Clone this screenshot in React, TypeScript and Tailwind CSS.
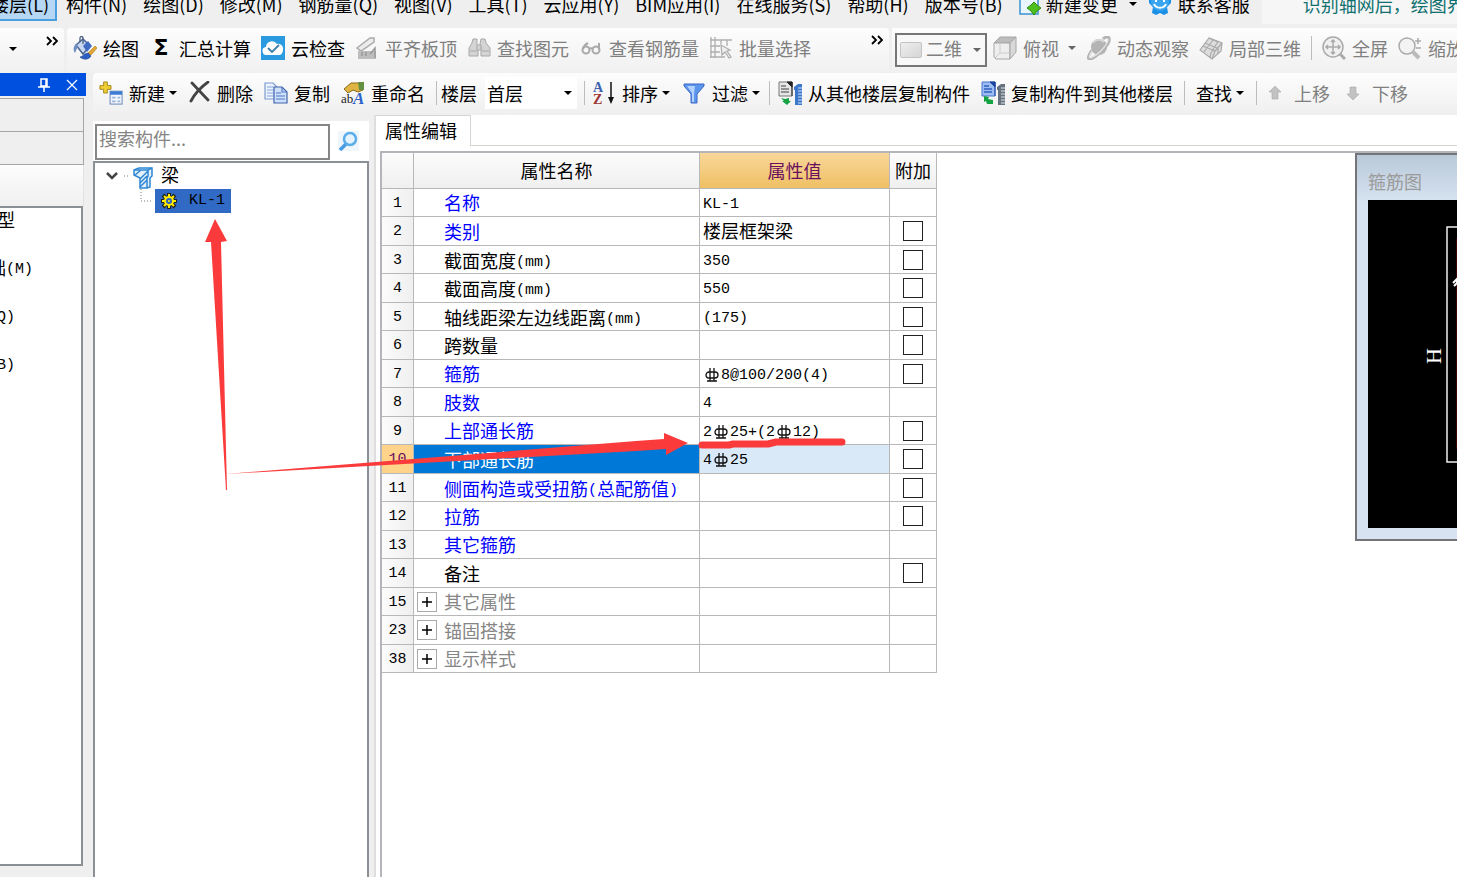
import React from 'react';

interface IconProps {
  className?: string;
}

const PaintIcon: React.FC<IconProps> = () => (
  <svg width="24" height="24" viewBox="0 0 24 24" className="shrink-0" aria-hidden="true">
    <path d="M3 9l7-6 7 7-7 8z" fill="#c9d8f0" stroke="#4a6694" strokeWidth="1.5" />
    <path d="M7 6V2c0-2 3-2 3 0v6" fill="none" stroke="#4a5f80" strokeWidth="1.3" />
    <path d="M3 8c-3 2-3 7-1 9l3-7z" fill="#6f8fc4" />
    <path d="M10 10l5-5 4 5-5 6z" fill="#3f6cc0" />
    <path d="M15 17l7-7 2 2-6 7z" fill="#e3a733" stroke="#a8741c" strokeWidth=".6" />
    <path d="M7 21c3 0 4-4 8-4l3 3c-2 4-8 4-11 1z" fill="#2c5fc6" stroke="#1d4288" strokeWidth=".6" />
  </svg>
);

const CloudCheckIcon: React.FC<IconProps> = () => (
  <svg width="24" height="24" viewBox="0 0 24 24" className="shrink-0" aria-hidden="true">
    <rect width="24" height="24" fill="#2a9be0" />
    <path d="M6 19a4 4 0 0 1-1-8 6 6 0 0 1 11-3 5 5 0 0 1 6 6c0 3-2 5-4 5z" fill="#fff" />
    <path d="M7 12l4 4 7-7" fill="none" stroke="#3d7da8" strokeWidth="1.8" />
  </svg>
);

const SlabIcon: React.FC<IconProps> = () => (
  <svg width="24" height="24" viewBox="0 0 24 24" className="shrink-0" aria-hidden="true">
    <path d="M2 12L15 2l4 0v4L6 15z" fill="#ececec" stroke="#aaa" strokeWidth="1.5" />
    <path d="M3 15h18v8H3z" fill="#bdbdbd" />
    <path d="M7 16v4M11 16v4M15 18l5-6v10" stroke="#999" strokeWidth="1.5" fill="none" />
  </svg>
);

const BinocularsIcon: React.FC<IconProps> = () => (
  <svg width="24" height="24" viewBox="0 0 24 24" className="shrink-0" fill="#d4d4d4" stroke="#a8a8a8" aria-hidden="true">
    <path d="M6 3h4v5l1 3v9H2v-8l3-5z" />
    <path d="M14 3h4l1 4 4 5v8h-9v-9l-1-3z" />
    <path d="M10 9h4v5h-4zM3 15h7M15 15h7" />
  </svg>
);

const GlassesIcon: React.FC<IconProps> = () => (
  <svg width="24" height="24" viewBox="0 0 24 24" className="shrink-0" fill="none" stroke="#aaa" strokeWidth="2" aria-hidden="true">
    <circle cx="7" cy="14" r="3.5" />
    <circle cx="17" cy="14" r="3.5" />
    <path d="M4 13c1-4 3-5 5-6M20 14V7M10 13c1-1 3-1 4 0" />
  </svg>
);

const BatchIcon: React.FC<IconProps> = () => (
  <svg width="24" height="24" viewBox="0 0 24 24" className="shrink-0" fill="none" stroke="#aeaeae" strokeWidth="1.3" aria-hidden="true">
    <path d="M2 1v21M6 1v21M1 4h22M1 10h10M1 16h10M1 21h15M12 4v4M18 4v6" />
    <path d="M12 9l9 5-3 1 4 6-2 1-4-6-3 3z" fill="#eee" />
  </svg>
);

const CubeIcon: React.FC<IconProps> = () => (
  <svg width="24" height="24" viewBox="0 0 24 24" className="shrink-0" stroke="#a6a6a6" aria-hidden="true">
    <path d="M1 7l6-6h16l-6 6z" fill="#bcbcbc" />
    <path d="M1 7h16v16H3l-2-2z" fill="#eee" />
    <path d="M17 7l6-6v15l-6 7z" fill="#d8d8d8" />
    <path d="M7 8v9h9M7 17l-5 5" fill="none" stroke="#ccc" />
  </svg>
);

const OrbitIcon: React.FC<IconProps> = () => (
  <svg width="24" height="24" viewBox="0 0 24 24" className="shrink-0" aria-hidden="true">
    <circle cx="12" cy="11" r="8" fill="#b4b4b4" />
    <path d="M6 7c3-4 8-4 11-1" fill="none" stroke="#d6d6d6" strokeWidth="2" />
    <path d="M5 14C-2 24 2 25 9 20S24 6 22 2c-1-2-4-1-6 1" fill="none" stroke="#b5b5b5" strokeWidth="3" />
    <path d="M5 15C0 23 3 23 9 19S22 6 21 3" fill="none" stroke="#e6e6e6" strokeWidth="1.2" />
  </svg>
);

const LocalCubeIcon: React.FC<IconProps> = () => (
  <svg width="24" height="24" viewBox="0 0 24 24" className="shrink-0" fill="#ddd" stroke="#aaa" strokeWidth="1.2" aria-hidden="true">
    <path d="M1 14l9-12 13 5-1 8-9 8z" />
    <path d="M10 2l9 4-1 1-6 10M4 10l12 5 7-8M6 7l12 5M14 4L5 16M16 15l-3 8M19 11v7M12 17l-1 5" fill="none" />
  </svg>
);

const FullScreenIcon: React.FC<IconProps> = () => (
  <svg width="24" height="24" viewBox="0 0 24 24" className="shrink-0" fill="none" stroke="#aaa" aria-hidden="true">
    <circle cx="11" cy="11" r="10" fill="#f0f0f0" strokeWidth="1.5" />
    <path d="M11 4v14M4 11h14M9 6l2-2 2 2M9 16l2 2 2-2M6 9l-2 2 2 2M16 9l2 2-2 2" strokeWidth="1.5" />
    <path d="M18 18l5 5" strokeWidth="3" />
  </svg>
);

const ZoomIcon: React.FC<IconProps> = () => (
  <svg width="24" height="24" viewBox="0 0 24 24" className="shrink-0" fill="none" stroke="#aaa" aria-hidden="true">
    <circle cx="9" cy="10" r="8" fill="#f3f3f3" strokeWidth="1.5" />
    <path d="M15 16l6 6" stroke="#bbb" strokeWidth="4" />
    <path d="M17 5h6M20 2v6M18 12h5" strokeWidth="1.5" />
  </svg>
);

const NewIcon: React.FC<IconProps> = () => (
  <svg width="24" height="24" viewBox="0 0 26 26" className="shrink-0" aria-hidden="true">
    <path d="M5 1h4v4h4v4H9v4H5V9H1V5h4z" fill="#f0cf35" stroke="#a48414" />
    <rect x="12" y="11" width="13" height="14" fill="#f2f6fc" stroke="#6080ae" />
    <path d="M12 11h13v4H12z" fill="#3e7bd4" />
    <path d="M14 18h4M20 18h3M14 22h4M20 22h3" stroke="#9db6dc" strokeWidth="2" />
  </svg>
);

const DeleteIcon: React.FC<IconProps> = () => (
  <svg width="22" height="24" viewBox="0 0 22 24" className="shrink-0" aria-hidden="true">
    <path d="M3 2l16 17M19 1C12 6 6 12 2 20" fill="none" stroke="#444" strokeWidth="2.8" strokeLinecap="round" />
  </svg>
);

const CopyIcon: React.FC<IconProps> = () => (
  <svg width="24" height="24" viewBox="0 0 24 24" className="shrink-0" strokeWidth="1.2" aria-hidden="true">
    <path d="M1 2h8l4 4v12H1z" fill="#edf3fc" stroke="#7d9bd0" />
    <path d="M3 6h6M3 9h7M3 12h7M3 15h7" stroke="#85a5dc" />
    <path d="M10 6h8l5 5v11H10z" fill="#cfe0fa" stroke="#3f62aa" />
    <path d="M18 6v5h5M12 12h5M12 15h9M12 18h9" fill="none" stroke="#4a76c8" />
  </svg>
);

const RenameIcon: React.FC<IconProps> = () => (
  <svg width="24" height="24" viewBox="0 0 24 24" className="shrink-0" aria-hidden="true">
    <path d="M3 8l7-6h7l5 3v4l-5 2-5-2-5 3z" fill="#e0b443" stroke="#8a6a1c" />
    <path d="M17 1h6v8h-5z" fill="#64913f" />
    <text x="0" y="22" fontSize="13" fontFamily="Liberation Serif, serif" fill="#222">ab</text>
    <text x="12" y="23" fontSize="17" fontWeight="bold" fontStyle="italic" fontFamily="Liberation Serif, serif" fill="#2c62c8">A</text>
  </svg>
);

const SortIcon: React.FC<IconProps> = () => (
  <svg width="24" height="24" viewBox="0 0 24 24" className="shrink-0" aria-hidden="true">
    <text x="1" y="11" fontSize="14" fontWeight="bold" fontFamily="Liberation Serif, serif" fill="#3e61ad">A</text>
    <text x="1" y="23" fontSize="14" fontWeight="bold" fontFamily="Liberation Serif, serif" fill="#9c3434">Z</text>
    <path d="M19 1v18" stroke="#111" strokeWidth="1.5" />
    <path d="M16 16h6l-3 7z" fill="#111" />
  </svg>
);

const FilterIcon: React.FC<IconProps> = () => (
  <svg width="24" height="24" viewBox="0 0 24 24" className="shrink-0" aria-hidden="true">
    <path d="M2 3h20v2l-7 8v9H9v-9L2 5z" fill="#5c95ed" stroke="#3a68c4" />
    <path d="M5 5h8l-1 8v8h-2v-9z" fill="#b4d2fb" />
  </svg>
);

const CopyFromIcon: React.FC<IconProps> = () => (
  <svg width="24" height="24" viewBox="0 0 24 24" className="shrink-0" aria-hidden="true">
    <path d="M1 1h13v14H1z" fill="#e5e5e5" stroke="#777" />
    <path d="M9 1h5v5zM14 1v14" fill="#222" stroke="#222" />
    <path d="M3 5h5M3 8h8M3 11h8" stroke="#777" strokeWidth="1.3" />
    <path d="M3 17l4 1 4-1v3h2l-4 4-5-4h2z" fill="#13a342" />
    <path d="M16 6l4-3h4v21h-7V9h-1z" fill="#3b78cb" />
    <path d="M20 7h4M20 10h4M20 13h4M20 16h4M20 19h4M20 22h4" stroke="#cfe0f8" />
  </svg>
);

const CopyToIcon: React.FC<IconProps> = () => (
  <svg width="24" height="24" viewBox="0 0 24 24" className="shrink-0" aria-hidden="true">
    <path d="M1 1h13v14H1z" fill="#9dbdf2" stroke="#4474cd" />
    <path d="M9 1h5v5zM14 1v14" fill="#1f46a0" stroke="#1f46a0" />
    <path d="M3 5h5M3 8h8M3 11h8" stroke="#2f5fc0" strokeWidth="1.3" />
    <path d="M3 15l5 1-1 2 5 1v4H6l-1-3-2 1z" fill="#13a342" />
    <path d="M16 6l4-3h4v21h-7V9h-1z" fill="#66727f" />
    <path d="M20 7h4M20 10h4M20 13h4M20 16h4M20 19h4M20 22h4" stroke="#dde2e8" />
  </svg>
);

const MoveIcon: React.FC<IconProps> = ({ className }) => (
  <svg width="14" height="14" viewBox="0 0 14 14" className={`shrink-0 ${className ?? ''}`} aria-hidden="true">
    <path d="M7 0l6 6h-3v7H4V6H1z" fill="#c2c2c2" stroke="#aaa" strokeWidth=".6" />
  </svg>
);

const ChangeIcon: React.FC<IconProps> = () => (
  <svg width="24" height="24" viewBox="0 0 24 24" className="shrink-0" aria-hidden="true">
    <path d="M2 0h18v22H2z" fill="#eaf6fd" stroke="#3d92cf" strokeWidth="1.5" />
    <path d="M16 10l3 3 4 3-4 3-3 4-3-4-4-3 4-3z" fill="#4fc01b" stroke="#2e8a10" />
  </svg>
);

const ServiceIcon: React.FC<IconProps> = () => (
  <svg width="24" height="24" viewBox="0 0 24 24" className="shrink-0" aria-hidden="true">
    <path d="M1 6h22v5l-4 4 1 6-4 2-4-2-4 2-4-2 1-6-4-4z" fill="#1c8fe6" />
    <circle cx="12" cy="10" r="9" fill="#3aa6f2" />
    <path d="M6 12c2 5 10 5 12 0M8 7v3M16 7v3" fill="none" stroke="#fff" strokeWidth="2" />
  </svg>
);

const SearchIcon: React.FC<IconProps> = () => (
  <svg width="22" height="22" viewBox="0 0 22 22" aria-hidden="true">
    <rect width="21" height="20" fill="#eef6fc" />
    <path d="M2 19l7-7" stroke="#4a9be0" strokeWidth="3.5" />
    <circle cx="12" cy="8" r="6" fill="#e4f3fd" stroke="#5badea" strokeWidth="2.5" />
  </svg>
);

const BeamIcon: React.FC<IconProps> = () => (
  <svg width="20" height="22" viewBox="0 0 20 22" fill="none" stroke="#2f86d2" strokeWidth="1.5" aria-hidden="true">
    <path d="M1 3l5-2h13v8l-2 2v9l-3 1H7V11L1 8z" fill="#e3f1fc" />
    <path d="M1 3h14l4-2M15 3v6l-1 2v10M2 8l6-5M7 12l8-8M7 16l7-7M7 20l7-7" />
  </svg>
);

const GearIcon: React.FC<IconProps> = () => (
  <svg width="16" height="16" viewBox="0 0 16 16" aria-hidden="true">
    <path d="M8 0v16M0 8h16M2 2l12 12M14 2L2 14" stroke="#222" strokeWidth="4" />
    <path d="M8 1v14M1 8h14M3 3l10 10M13 3L3 13" stroke="#ffee00" strokeWidth="2" />
    <circle cx="8" cy="8" r="4" fill="#2e63b8" stroke="#ffee00" strokeWidth="2" />
    <circle cx="8" cy="8" r="1" fill="#ffee00" />
  </svg>
);

// Grade symbol of the steel bar, as wide as one Chinese character
const Rebar: React.FC = () => (
  <svg width="18" height="14" viewBox="0 0 18 14" role="img" aria-label="HRB400" className="inline-block align-[-3px]" fill="none" stroke="#111" strokeWidth="1.3">
    <rect x="3" y="4" width="12" height="6" rx="3" />
    <path d="M7 0v13M11 0v13M4 13h10" />
  </svg>
);

const Caret: React.FC<{ muted?: boolean }> = ({ muted }) => (
  <svg width="10" height="6" viewBox="0 0 10 6" className="pointer-events-none shrink-0" aria-hidden="true">
    <path d="M1 1h8L5 5z" fill={muted ? '#666' : '#000'} />
  </svg>
);

const Chevrons: React.FC = () => (
  <svg width="14" height="10" viewBox="0 0 14 10" fill="none" stroke="#000" strokeWidth="1.8" aria-hidden="true">
    <path d="M1 1l4 4-4 4M7 1l4 4-4 4" />
  </svg>
);

const Separator: React.FC = () => <div className="h-6 w-px shrink-0 bg-[#bdbdbd]" />;

interface ToolButtonProps {
  icon?: React.ReactNode;
  label: string;
  caret?: boolean;
  disabled?: boolean;
}

const ToolButton: React.FC<ToolButtonProps> = ({ icon, label, caret = false, disabled = false }) => (
  <button
    type="button"
    disabled={disabled}
    className={`flex shrink-0 items-center gap-[6px] leading-6 ${disabled ? 'text-[#808080]' : 'text-black'}`}
  >
    {icon}
    <span className={`flex items-center ${disabled ? 'gap-2' : 'gap-[3px]'}`}>
      {label}
      {caret && <Caret muted={disabled} />}
    </span>
  </button>
);

const menus = [
  '构件(N)', '绘图(D)', '修改(M)', '钢筋量(Q)', '视图(V)', '工具(T)',
  '云应用(Y)', 'BIM应用(I)', '在线服务(S)', '帮助(H)', '版本号(B)',
];

const MenuBar: React.FC = () => (
  <header className="flex h-7 shrink-0 items-end overflow-hidden">
    <nav className="flex h-10 flex-1 items-start whitespace-nowrap leading-8">
      <button type="button" className="flex h-[33px] w-[57px] shrink-0 justify-end overflow-hidden border-r-2 border-b-2 border-[#4a9fdf] bg-[#b5d7f3] pr-[6px]">
        <span>楼层(L)</span>
      </button>
      <div className="ml-[9px] flex gap-4">
        {menus.map((menu) => (
          <button key={menu} type="button">{menu}</button>
        ))}
      </div>
      <div className="ml-[15px] flex h-8 items-center gap-[10px]">
        <button type="button" className="flex items-center gap-1">
          <ChangeIcon />
          <span>新建变更</span>
          <span className="ml-[6px]"><Caret /></span>
        </button>
        <button type="button" className="flex items-center gap-[6px]">
          <ServiceIcon />
          <span>联系客服</span>
        </button>
      </div>
      <div className="ml-3 h-9 flex-1 overflow-hidden bg-[#f6f6f6] pl-[41px] text-[#107070]">识别轴网后，绘图界面</div>
    </nav>
  </header>
);

const ViewToolbar: React.FC = () => (
  <div className="flex h-[45px] shrink-0 gap-[3px] overflow-hidden whitespace-nowrap">
    <div className="flex w-16 shrink-0 items-center justify-between rounded-r bg-linear-to-b from-[#fdfdfd] to-[#f0f0f0] pr-1 pb-1 pl-2">
      <Caret />
      <button type="button" aria-label="更多" className="mb-4"><Chevrons /></button>
    </div>
    <div className="flex w-[822px] shrink-0 items-center gap-[10px] rounded bg-linear-to-b from-[#fdfdfd] to-[#f0f0f0] pr-1 pb-[6px] pl-[6px]">
      <ToolButton icon={<PaintIcon />} label="绘图" />
      <ToolButton icon={<span className="w-6 text-center font-['DejaVu_Sans',sans-serif] text-[22px] font-bold">Σ</span>} label="汇总计算" />
      <ToolButton icon={<CloudCheckIcon />} label="云检查" />
      <ToolButton icon={<SlabIcon />} label="平齐板顶" disabled />
      <ToolButton icon={<BinocularsIcon />} label="查找图元" disabled />
      <ToolButton icon={<GlassesIcon />} label="查看钢筋量" disabled />
      <ToolButton icon={<BatchIcon />} label="批量选择" disabled />
      <button type="button" aria-label="更多" className="mb-4 ml-auto"><Chevrons /></button>
    </div>
    <div className="flex flex-1 items-center gap-[10px] bg-linear-to-b from-[#fdfdfd] to-[#f0f0f0] pb-[6px] pl-[3px]">
      <label className="mt-1 -mr-1 flex h-[34px] w-[92px] shrink-0 items-center border-2 border-[#777] bg-[#f8f8f8] px-[3px] text-[#808080]">
        <span className="h-4 w-[22px] shrink-0 rounded-xs border border-[#c4c4c4] bg-linear-to-br from-[#efefef] to-[#d5d5d5]" />
        <select aria-label="视图" disabled className="mb-[3px] w-[46px] appearance-none bg-transparent pl-1 opacity-100">
          <option>二维</option>
        </select>
        <span className="ml-auto"><Caret muted /></span>
      </label>
      <ToolButton icon={<CubeIcon />} label="俯视" caret disabled />
      <ToolButton icon={<OrbitIcon />} label="动态观察" disabled />
      <ToolButton icon={<LocalCubeIcon />} label="局部三维" disabled />
      <Separator />
      <ToolButton icon={<FullScreenIcon />} label="全屏" disabled />
      <ToolButton icon={<ZoomIcon />} label="缩放" disabled />
    </div>
  </div>
);

const moduleItems = [
  { label: '类型', width: 'w-[15px]' },
  { label: '基础(M)', width: 'w-[33px]' },
  { label: '(Q)', width: 'w-[15px]' },
  { label: '(B)', width: 'w-[15px]' },
];

const ModulePanel: React.FC = () => (
  <aside className="flex w-[86px] shrink-0 flex-col">
    <div className="flex h-[23px] items-center justify-end gap-4 bg-[#0050e0] pr-2">
      <button type="button" aria-label="固定">
        <svg width="12" height="14" viewBox="0 0 12 14" fill="none" stroke="#fff" strokeWidth="1.5">
          <path d="M3 1h6v7H3zM8 1v7M0 9h12M6 9v5" />
        </svg>
      </button>
      <button type="button" aria-label="关闭">
        <svg width="12" height="12" viewBox="0 0 12 12" stroke="#fff" strokeWidth="1.2">
          <path d="M1 1l10 10M11 1L1 11" />
        </svg>
      </button>
    </div>
    <div className="mt-[2px] mr-[2px] h-[34px] border-t border-r border-b border-[#a5a5a5] bg-[#efefef]" />
    <div className="mr-[2px] h-[33px] border-r border-b border-[#a5a5a5] bg-[#efefef]" />
    <div className="mr-[2px] h-[41px] border-r border-[#e2e2e2] bg-linear-to-b from-[#fdfdfd] to-[#f0f0f0]" />
    <ul className="mr-[3px] mb-[11px] flex-1 border-t-2 border-r-2 border-b-2 border-[#8b9096] bg-white font-['Liberation_Mono','Noto_Sans_CJK_SC',monospace]">
      {moduleItems.map((item) => (
        <li key={item.label} className={`mb-5 flex h-7 items-center justify-end overflow-hidden whitespace-nowrap ${item.width}`}>
          <MixedText text={item.label} />
        </li>
      ))}
    </ul>
  </aside>
);

const ComponentToolbar: React.FC = () => (
  <div className="flex h-[42px] shrink-0 items-center gap-[11px] overflow-hidden whitespace-nowrap rounded-l bg-linear-to-b from-[#fdfdfd] to-[#efefef] pb-[2px] pl-[6px]">
    <ToolButton icon={<NewIcon />} label="新建" caret />
    <ToolButton icon={<DeleteIcon />} label="删除" />
    <ToolButton icon={<CopyIcon />} label="复制" />
    <ToolButton icon={<RenameIcon />} label="重命名" />
    <div className="flex shrink-0 items-center gap-[7px]">
      <label className="flex shrink-0 items-center gap-1">
        <Separator />
        楼层
        <span className="ml-1 flex h-8 w-[92px] items-center bg-white pr-1">
          <select className="w-[78px] appearance-none bg-transparent pl-[2px]">
            <option>首层</option>
          </select>
          <Caret />
        </span>
      </label>
      <Separator />
      <ToolButton icon={<SortIcon />} label="排序" caret />
    </div>
    <div className="flex shrink-0 items-center gap-2">
      <ToolButton icon={<FilterIcon />} label="过滤" caret />
      <Separator />
      <ToolButton icon={<CopyFromIcon />} label="从其他楼层复制构件" />
    </div>
    <ToolButton icon={<CopyToIcon />} label="复制构件到其他楼层" />
    <Separator />
    <ToolButton label="查找" caret />
    <Separator />
    <div className="flex gap-4">
      <ToolButton icon={<MoveIcon className="mr-[6px]" />} label="上移" disabled />
      <ToolButton icon={<MoveIcon className="mr-[6px] rotate-180" />} label="下移" disabled />
    </div>
  </div>
);

const ComponentTree: React.FC = () => (
  <section className="flex w-[276px] shrink-0 flex-col pt-[6px]">
    <div className="flex h-10 items-center bg-white pt-[2px] pl-[2px]">
      <input
        type="text"
        aria-label="搜索构件"
        placeholder="搜索构件..."
        className="h-9 w-[235px] border-2 border-[#868686] bg-white px-[2px] pb-2 outline-none placeholder:text-[#858585]"
      />
      <button type="button" aria-label="搜索" className="ml-2"><SearchIcon /></button>
    </div>
    <div className="flex-1 border-t-2 border-r-2 border-l-2 border-[#8b9096] bg-white pl-2">
      <div className="flex h-[26px] items-center">
        <svg width="26" height="12" viewBox="0 0 26 12" fill="none">
          <path d="M4 3l5 5 5-5" stroke="#444" strokeWidth="2.5" />
          <path d="M21 6h5" stroke="#777" strokeDasharray="1 2" />
        </svg>
        <span className="ml-1 pt-1"><BeamIcon /></span>
        <span className="mb-1 ml-2">梁</span>
      </div>
      <div className="flex h-6 items-center">
        <svg width="14" height="24" viewBox="0 0 14 24" className="ml-9" fill="none" aria-hidden="true">
          <path d="M2 0v12h12" stroke="#777" strokeDasharray="1 2" />
        </svg>
        <button type="button" className="ml-[2px] flex h-6 w-[76px] items-center gap-3 bg-[#316ac5] pl-[6px] font-['Liberation_Mono',monospace] text-[15px]">
          <GearIcon />
          KL-1
        </button>
      </div>
    </div>
  </section>
);

// Latin letters take half the width of a Chinese character, '#' stands for the bar grade
const MixedText: React.FC<{ text: string }> = ({ text }) => (
  <>
    {text.split(/([\x20-\x7e]+)/).map((part, index) =>
      index % 2 === 1 ? (
        <span key={index} className="align-[2px] text-[15px]">
          {part.split('#').map((piece, i) => (
            <React.Fragment key={i}>
              {i > 0 && <Rebar />}
              {piece}
            </React.Fragment>
          ))}
        </span>
      ) : (
        <span key={index}>{part}</span>
      )
    )}
  </>
);

interface Property {
  no: number;
  name: string;
  value?: string;
  kind: 'key' | 'plain' | 'group';
  extra?: boolean;
}

const properties: Property[] = [
  { no: 1, name: '名称', value: 'KL-1', kind: 'key' },
  { no: 2, name: '类别', value: '楼层框架梁', kind: 'key', extra: true },
  { no: 3, name: '截面宽度(mm)', value: '350', kind: 'plain', extra: true },
  { no: 4, name: '截面高度(mm)', value: '550', kind: 'plain', extra: true },
  { no: 5, name: '轴线距梁左边线距离(mm)', value: '(175)', kind: 'plain', extra: true },
  { no: 6, name: '跨数量', kind: 'plain', extra: true },
  { no: 7, name: '箍筋', value: '#8@100/200(4)', kind: 'key', extra: true },
  { no: 8, name: '肢数', value: '4', kind: 'key' },
  { no: 9, name: '上部通长筋', value: '2#25+(2#12)', kind: 'key', extra: true },
  { no: 10, name: '下部通长筋', value: '4#25', kind: 'key', extra: true },
  { no: 11, name: '侧面构造或受扭筋(总配筋值)', kind: 'key', extra: true },
  { no: 12, name: '拉筋', kind: 'key', extra: true },
  { no: 13, name: '其它箍筋', kind: 'key' },
  { no: 14, name: '备注', kind: 'plain', extra: true },
  { no: 15, name: '其它属性', kind: 'group' },
  { no: 23, name: '锚固搭接', kind: 'group' },
  { no: 38, name: '显示样式', kind: 'group' },
];

const nameColors = {
  key: 'text-[#0000ff]',
  plain: 'text-black',
  group: 'text-[#858585]',
};

const PropertyTable: React.FC = () => {
  const selected = 10;

  return (
    <table className="w-[555px] shrink-0 table-fixed border-separate border-spacing-0 self-start whitespace-nowrap leading-6 font-['Liberation_Mono','Noto_Sans_CJK_SC',monospace] [&_td]:border-r [&_td]:border-b [&_td]:border-[#b8b8b8] [&_th]:border-r [&_th]:border-b [&_th]:border-[#b8b8b8]">
      <colgroup>
        <col className="w-8" />
        <col className="w-[286px]" />
        <col className="w-[190px]" />
        <col className="w-[47px]" />
      </colgroup>
      <thead>
        <tr className="h-9 bg-linear-to-b from-[#fcfcfc] to-[#efefef] [&_th]:pt-[5px] [&_th]:font-normal">
          <th aria-label="序号" />
          <th>属性名称</th>
          <th className="bg-linear-to-b from-[#f9d799] to-[#efc063] text-[#6b0f60]">属性值</th>
          <th>附加</th>
        </tr>
      </thead>
      <tbody>
        {properties.map((property) => {
          const isSelected = property.no === selected;
          return (
            <tr key={property.no} className="odd:h-7 even:h-[29px]">
              <td className={`pt-[2px] text-center text-[15px] ${isSelected ? 'bg-[#ffd48a] text-[#6b0f60]' : 'bg-linear-to-r from-[#fcfcfc] to-[#efefef]'}`}>
                {property.no}
              </td>
              <td className={isSelected ? 'bg-[#0078d7] text-white' : nameColors[property.kind]}>
                <div className="flex h-[27px] items-center">
                  <span className="flex w-[30px] shrink-0 pl-[3px]">
                    {property.kind === 'group' && (
                      <button type="button" aria-label={`展开${property.name}`} className="flex size-5 items-center justify-center border border-[#aaa] bg-white">
                        <svg width="12" height="12" viewBox="0 0 12 12" stroke="#000" strokeWidth="1.5">
                          <path d="M6 1v10M1 6h10" />
                        </svg>
                      </button>
                    )}
                  </span>
                  <span className="pt-[6px] leading-[21px]"><MixedText text={property.name} /></span>
                </div>
              </td>
              <td className={isSelected ? 'bg-[#d9e9f7] pl-[3px]' : 'pl-[3px]'}>
                <div className="flex h-[27px] items-center">
                  <span className="pt-1 leading-[21px]">{property.value && <MixedText text={property.value} />}</span>
                </div>
              </td>
              <td>
                {property.extra && (
                  <input
                    type="checkbox"
                    aria-label={`附加${property.name}`}
                    className="mx-auto block size-5 appearance-none border border-[#222] bg-white"
                  />
                )}
              </td>
            </tr>
          );
        })}
      </tbody>
    </table>
  );
};

const StirrupWindow: React.FC = () => (
  <section className="ml-auto flex h-[388px] w-[102px] shrink-0 flex-col overflow-hidden border-t-2 border-b-2 border-l-2 border-[#737578] bg-linear-to-b from-[#b9c9d8] to-[#d7e3f1] to-[48px] pb-[11px] pl-[11px]">
    <h2 className="flex h-[45px] items-center pt-[6px] text-[#9b9b9b]">箍筋图</h2>
    <svg width="200" height="328" viewBox="0 0 200 328" className="shrink-0 bg-black" fill="none" aria-label="箍筋图">
      <path d="M79 27h120v235H79z" stroke="#eee" strokeWidth="1.5" />
      <path d="M89 38v211" stroke="#700000" />
      <path d="M85 83l4-4v4l-3 3" stroke="#fff" strokeWidth="2" />
      <text x="73" y="156" fill="#fff" fontSize="22" textAnchor="middle" fontFamily="Liberation Serif, serif" transform="rotate(-90 73 156)">H</text>
    </svg>
  </section>
);

const PropertyEditor: React.FC = () => (
  <main className="ml-[5px] flex min-w-0 flex-1 flex-col border-l-2 border-[#dedede] bg-white">
    <div className="flex h-[31px] shrink-0 border-b border-[#d6d6d6]">
      <button type="button" className="-mb-px h-[31px] w-[95px] shrink-0 border-t border-r border-[#d6d6d6] bg-white pr-1 pb-[3px]">
        属性编辑
      </button>
    </div>
    <div className="mt-[5px] ml-1 flex min-h-0 flex-1 border-t-2 border-l-2 border-[#b4b4bb]">
      <PropertyTable />
      <StirrupWindow />
    </div>
  </main>
);

const Annotations: React.FC = () => (
  <svg width="1457" height="877" viewBox="0 0 1457 877" className="pointer-events-none absolute top-0 left-0" fill="#fb3b3b" aria-hidden="true">
    <path d="M215 219l12 22-6 1 6 248h-1L211 242h-6z" />
    <path d="M226 474l410-33 28-2v-6l24 10-22 12v-6l-30 2z" />
    <path d="M702 445h27l4-1h35l8-2h66" fill="none" stroke="#fb3b3b" strokeWidth="7" strokeLinecap="round" strokeLinejoin="round" />
  </svg>
);

const App: React.FC = () => (
  <div className="relative flex h-screen w-full flex-col overflow-hidden bg-[#efefef] text-lg text-black font-['Noto_Sans_CJK_SC',sans-serif]">
    <MenuBar />
    <ViewToolbar />
    <div className="flex min-h-0 flex-1">
      <ModulePanel />
      <div className="ml-[7px] flex min-w-0 flex-1 flex-col">
        <ComponentToolbar />
        <div className="flex min-h-0 flex-1">
          <ComponentTree />
          <PropertyEditor />
        </div>
      </div>
    </div>
    <Annotations />
  </div>
);

export default App;
